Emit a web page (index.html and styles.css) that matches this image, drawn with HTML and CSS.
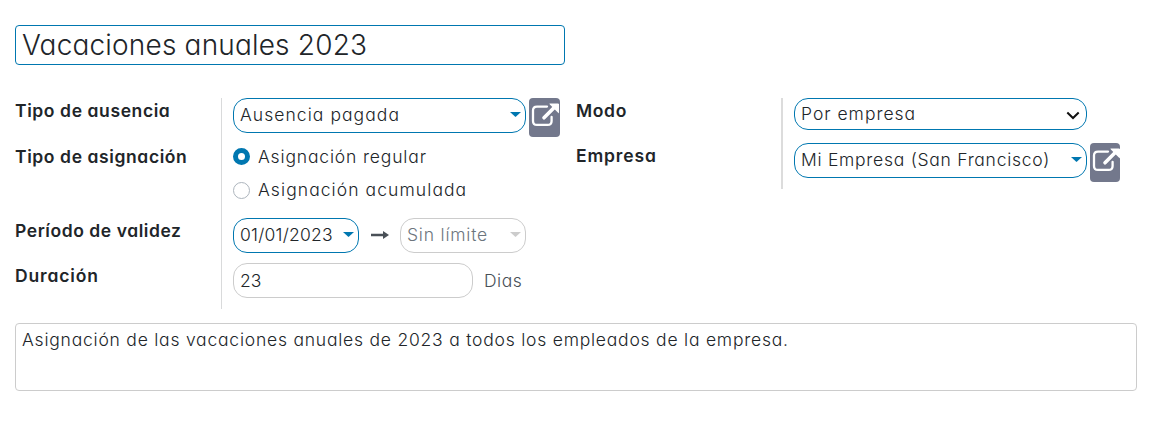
FILE: index.html
```html
<!DOCTYPE html>
<html lang="es">
<head>
<meta charset="utf-8">
<title>Vacaciones anuales 2023</title>
<link rel="stylesheet" href="styles.css">
</head>
<body>
<svg width="0" height="0" class="defs">
  <symbol id="external" viewBox="0 0 31 39">
    <path d="M18 8.6H8Q4 8.6 4 12.6V22.9Q4 26.9 8 26.9H18.6Q22.6 26.9 22.6 22.9V19" fill="none" stroke="#fff" stroke-width="2.3" stroke-linecap="round"/>
    <path d="M15 19.8L25.5 9.3" fill="none" stroke="#fff" stroke-width="3.6" stroke-linecap="round"/>
    <path d="M20.8 6H29.5V14.7Z" fill="#fff" stroke="#fff" stroke-width="1" stroke-linejoin="round"/>
  </symbol>
</svg>
<main class="form">
  <div class="title"><span class="t-title">Vacaciones anuales 2023</span></div>
  <div class="groups">
    <section class="group group-left">
      <div class="labels">
        <div class="label h-type"><span class="l-type">Tipo de ausencia</span></div>
        <div class="label h-alloc"><span class="l-alloc">Tipo de asignación</span></div>
        <div class="label h-period"><span class="l-period">Período de validez</span></div>
        <div class="label"><span class="l-dur">Duración</span></div>
      </div>
      <div class="fields">
        <div class="line">
          <div class="field wide"><span class="t-type">Ausencia pagada</span><i class="caret"></i></div>
          <button class="open" aria-label="Abrir"><svg class="icon"><use href="#external"/></svg></button>
        </div>
        <div class="radios">
          <div class="option"><i class="radio checked"></i><span class="t-reg">Asignación regular</span></div>
          <div class="option"><i class="radio"></i><span class="t-acc">Asignación acumulada</span></div>
        </div>
        <div class="line period">
          <div class="field date"><span class="t-date">01/01/2023</span><i class="caret"></i></div>
          <svg class="arrow" viewBox="0 0 18 10"><path d="M0 3.7H12V0.9L18 5L12 9.1V6.3H0Z" fill="#495057"/></svg>
          <div class="field date muted"><span class="t-limit">Sin límite</span><i class="caret"></i></div>
        </div>
        <div class="line">
          <div class="field days"><span class="t-num">23</span></div>
          <span class="unit t-unit">Dias</span>
        </div>
      </div>
    </section>
    <section class="group group-right">
      <div class="labels">
        <div class="label h-mode"><span class="l-mode">Modo</span></div>
        <div class="label"><span class="l-comp">Empresa</span></div>
      </div>
      <div class="fields">
        <div class="field wide mode"><span class="t-mode">Por empresa</span><svg class="chevron" viewBox="0 0 14 9"><path d="M1.3 1.5L7 7L12.7 1.5" fill="none" stroke="#111" stroke-width="2"/></svg></div>
        <div class="line">
          <div class="field wide"><span class="t-comp">Mi Empresa (San Francisco)</span><i class="caret"></i></div>
          <button class="open narrow" aria-label="Abrir"><svg class="icon"><use href="#external"/></svg></button>
        </div>
      </div>
    </section>
  </div>
  <div class="notes"><span class="t-notes">Asignación de las vacaciones anuales de 2023 a todos los empleados de la empresa.</span></div>
</main>
</body>
</html>
```
FILE: styles.css
```css
* { box-sizing: border-box; }
body {
  margin: 0;
  background: #fff;
  color: #212529;
  font: 300 17.5px/26px Inter, "Open Sans", sans-serif;
  font-feature-settings: "cv11";
}
span { white-space: nowrap; }
.defs { position: absolute; }
.form { padding: 25px 17px 0 15px; }
.title {
  width: 550px;
  height: 40px;
  padding: 0 6px;
  border: 1px solid #0077b0;
  border-radius: 4px;
  font-size: 28px;
  line-height: 38px;
}
.groups { display: flex; align-items: flex-start; margin-top: 33px; }
.group { display: flex; }
.group-left { width: 561px; height: 211px; }
.group-right { height: 91px; }
.labels { font-weight: 600; }
.group-left .labels { width: 207px; border-right: 1px solid #d9dadb; }
.group-right .labels { width: 207px; border-right: 2px solid #dcdcdc; }
.h-type { height: 46px; }
.h-alloc { height: 74px; }
.h-period, .h-mode { height: 45px; }
.fields { padding-left: 11px; }
.line { display: flex; align-items: flex-start; }
.field {
  display: flex;
  align-items: center;
  justify-content: space-between;
  height: 35px;
  padding: 0 4px 2px 6px;
  border: 1px solid #0077b0;
  border-radius: 14px;
}
.wide { width: 293px; }
.mode { height: 32px; margin-bottom: 13px; padding: 0 6px 0 6px; }
.date { width: 126px; }
.days { width: 240px; border-color: #ccc; padding-bottom: 0; }
.muted { border-color: #ccc; color: #6c757d; }
.caret {
  width: 11px;
  height: 5px;
  background: #0077b0;
  clip-path: polygon(0 0, 100% 0, 50% 100%);
}
.muted .caret { background: #ccc; }
.chevron { width: 14px; height: 9px; margin-top: 2px; }
.open {
  width: 31px;
  height: 39px;
  margin-left: 3px;
  padding: 0;
  border: 0;
  border-radius: 4px;
  background: #73788c;
  overflow: hidden;
}
.narrow { width: 30px; }
.icon { display: block; width: 31px; height: 39px; }
.radios { height: 81px; padding-top: 3px; }
.option { display: flex; align-items: center; height: 33px; gap: 8px; }
.radio { width: 17px; height: 17px; border: 1px solid #adb5bd; border-radius: 50%; margin-top: 2px; }
.checked { border: 5.5px solid #0077b0; margin-top: 0; }
.period { margin-bottom: 10px; }
.arrow { width: 18px; height: 10px; margin: 12px 11px 0 12px; }
.unit { margin: 5px 0 0 11px; color: #495057; }
.notes {
  height: 68px;
  margin-top: 14px;
  padding: 3px 6px;
  border: 1px solid #ccc;
  border-radius: 4px;
}

.t-title { letter-spacing: 0.18px; }
.t-type { letter-spacing: 1.06px; }
.t-reg { letter-spacing: 0.84px; }
.t-acc { letter-spacing: 1.08px; }
.t-date { letter-spacing: 0.24px; }
.t-limit { letter-spacing: 0.79px; }
.t-unit { letter-spacing: 0.5px; }
.t-mode { letter-spacing: 1px; }
.t-comp { letter-spacing: 0.73px; }
.t-notes { letter-spacing: 0.78px; }
.l-type { letter-spacing: 0.6px; }
.l-alloc { letter-spacing: 0.6px; }
.l-period { letter-spacing: 0.56px; }
.l-dur { letter-spacing: 0.85px; }
.l-mode { letter-spacing: 0.65px; }
.l-comp { letter-spacing: 0.85px; }
```
